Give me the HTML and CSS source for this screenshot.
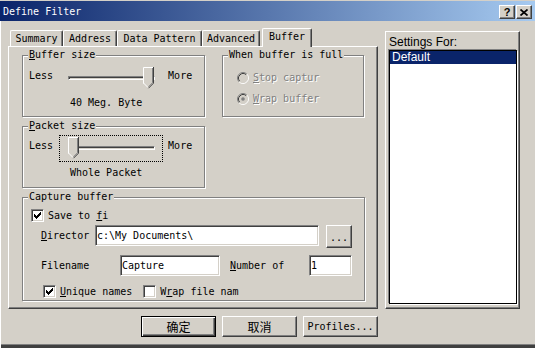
FILE: index.html
```html
<!DOCTYPE html>
<html lang="en">
<head>
    <meta charset="UTF-8">
    <title>Define Filter</title>
    <link rel="stylesheet" href="styles.css">
</head>
<body>
<div class="window">

    <!-- Title bar -->
    <div class="titlebar">
        <span class="title">Define Filter</span>
        <div class="cap-buttons">
            <span class="cap-btn help">?</span>
            <span class="cap-btn close">
                <svg width="8" height="7" viewBox="0 0 8 7"><path d="M0.5 0.5L7.5 6.5M7.5 0.5L0.5 6.5" stroke="#000" stroke-width="1.7"/></svg>
            </span>
        </div>
    </div>

    <div class="main">
        <div class="left">
            <!-- Tabs -->
            <div class="tabs">
                <span class="tab w-summary">Summary</span>
                <span class="tab w-address">Address</span>
                <span class="tab w-pattern">Data Pattern</span>
                <span class="tab w-advanced">Advanced</span>
                <span class="tab active">Buffer</span>
            </div>

            <div class="panel">
                <div class="row-top">
                    <div class="group g-buffer">
                        <div class="group-title"><u>B</u>uffer size</div>
                        <div class="slider-row first">
                            <span class="sl-label">Less</span>
                            <div class="slider">
                                <div class="track"></div>
                                <svg class="thumb thumb-right" width="11" height="22" viewBox="0 0 11 22">
                                    <polygon points="0,0 11,0 11,16 5.5,21.5 0,16" fill="#d4d0c8"/>
                                    <polyline points="0.5,16.5 0.5,0.5 10,0.5" fill="none" stroke="#fff"/>
                                    <polyline points="0.5,16 5,20.5" fill="none" stroke="#fff"/>
                                    <polyline points="10.5,0 10.5,16.2 5.5,21.2" fill="none" stroke="#404040"/>
                                    <polyline points="9.5,1 9.5,15.8 5.5,19.8" fill="none" stroke="#808080"/>
                                </svg>
                            </div>
                            <span class="sl-label more">More</span>
                        </div>
                        <div class="sl-caption">40 Meg. Byte</div>
                    </div>

                    <div class="group g-when">
                        <div class="group-title">When buffer is full</div>
                        <div class="radio-row first">
                            <svg class="radio" width="12" height="12" viewBox="0 0 12 12">
                                <circle cx="6" cy="6" r="5" fill="#d4d0c8"/>
                                <path d="M2.11 9.89A5.5 5.5 0 0 1 9.89 2.11" fill="none" stroke="#808080"/>
                                <path d="M9.89 2.11A5.5 5.5 0 0 1 2.11 9.89" fill="none" stroke="#fff"/>
                                <path d="M2.82 9.18A4.5 4.5 0 0 1 9.18 2.82" fill="none" stroke="#404040"/>
                                <path d="M9.18 2.82A4.5 4.5 0 0 1 2.82 9.18" fill="none" stroke="#d4d0c8"/>
                            </svg>
                            <span class="disabled"><u>S</u>top captur</span>
                        </div>
                        <div class="radio-row">
                            <svg class="radio" width="12" height="12" viewBox="0 0 12 12">
                                <circle cx="6" cy="6" r="5" fill="#d4d0c8"/>
                                <path d="M2.11 9.89A5.5 5.5 0 0 1 9.89 2.11" fill="none" stroke="#808080"/>
                                <path d="M9.89 2.11A5.5 5.5 0 0 1 2.11 9.89" fill="none" stroke="#fff"/>
                                <path d="M2.82 9.18A4.5 4.5 0 0 1 9.18 2.82" fill="none" stroke="#404040"/>
                                <path d="M9.18 2.82A4.5 4.5 0 0 1 2.82 9.18" fill="none" stroke="#d4d0c8"/>
                                <circle cx="6" cy="6" r="1.8" fill="#808080"/>
                            </svg>
                            <span class="disabled"><u>W</u>rap buffer</span>
                        </div>
                    </div>
                </div>

                <div class="group g-packet">
                    <div class="group-title"><u>P</u>acket size</div>
                    <div class="slider-row">
                        <span class="sl-label">Less</span>
                        <div class="slider focus">
                            <div class="track"></div>
                            <svg class="thumb" width="11" height="22" viewBox="0 0 11 22">
                                <polygon points="0,0 11,0 11,16 5.5,21.5 0,16" fill="#d4d0c8"/>
                                <polyline points="0.5,16.5 0.5,0.5 10,0.5" fill="none" stroke="#fff"/>
                                <polyline points="0.5,16 5,20.5" fill="none" stroke="#fff"/>
                                <polyline points="10.5,0 10.5,16.2 5.5,21.2" fill="none" stroke="#404040"/>
                                <polyline points="9.5,1 9.5,15.8 5.5,19.8" fill="none" stroke="#808080"/>
                            </svg>
                        </div>
                        <span class="sl-label more">More</span>
                    </div>
                    <div class="sl-caption">Whole Packet</div>
                </div>

                <div class="group g-capture">
                    <div class="group-title">Capture buffer</div>
                    <div class="check-row save-row">
                        <span class="check"><svg width="11" height="11" viewBox="0 0 11 11"><path d="M2 4h1v3h-1zM3 5h1v3h-1zM4 6h1v3h-1zM5 5h1v3h-1zM6 4h1v3h-1zM7 3h1v3h-1zM8 2h1v3h-1z" fill="#000"/></svg></span>
                        <span>Save to <u>f</u>i</span>
                    </div>
                    <div class="field-row dir-row">
                        <span class="f-label w-dir"><u>D</u>irector</span>
                        <input class="field f-dir" type="text" value="c:\My Documents\">
                        <span class="btn browse">...</span>
                    </div>
                    <div class="field-row file-row">
                        <span class="f-label w-file">Filename</span>
                        <input class="field f-file" type="text" value="Capture">
                        <span class="f-label w-num"><u>N</u>umber of</span>
                        <input class="field f-num" type="text" value="1">
                    </div>
                    <div class="check-row unique-row">
                        <span class="check"><svg width="11" height="11" viewBox="0 0 11 11"><path d="M2 4h1v3h-1zM3 5h1v3h-1zM4 6h1v3h-1zM5 5h1v3h-1zM6 4h1v3h-1zM7 3h1v3h-1zM8 2h1v3h-1z" fill="#000"/></svg></span>
                        <span><u>U</u>nique names</span>
                        <span class="check second"></span>
                        <span>W<u>r</u>ap file nam</span>
                    </div>
                </div>
            </div>
        </div>

        <!-- Settings list -->
        <div class="settings">
            <div class="settings-label">Settings For:</div>
            <div class="listbox">
                <div class="item selected">Default</div>
            </div>
        </div>
    </div>

    <div class="buttons">
        <span class="btn push default cjk">确定</span>
        <span class="btn push cjk">取消</span>
        <span class="btn push">Profiles...</span>
    </div>
</div>
</body>
</html>
```

FILE: styles.css
```css
html, body {
    margin: 0;
    padding: 0;
    background: #d4d0c8;
    overflow: hidden;
}
.window {
    width: 535px;
    height: 348px;
    box-sizing: border-box;
    font-family: "DejaVu Sans Mono", monospace;
    font-size: 10px;
    line-height: 12px;
    color: #000;
    background: #d4d0c8;
    box-shadow: inset 1px 0 0 #fff, inset 0 -4px 0 #404040, inset 0 -5px 0 #808080;
}
u {
    text-decoration: underline;
    text-underline-offset: 1px;
}
/* Title bar */
.titlebar {
    margin-top: 1px;
    height: 20px;
    box-sizing: border-box;
    padding: 2px 3px 0 3px;
    display: flex;
    align-items: center;
    justify-content: space-between;
    background: linear-gradient(to right, #0a246a, #a6caf0);
}
.title {
    color: #fff;
}
.cap-buttons {
    display: flex;
    gap: 1px;
}
.cap-btn {
    width: 16px;
    height: 14px;
    box-sizing: border-box;
    display: flex;
    align-items: center;
    justify-content: center;
    background: #d4d0c8;
    border: 1px solid;
    border-color: #fff #404040 #404040 #fff;
    box-shadow: inset -1px -1px 0 #808080;
}
.help {
    font-family: "Liberation Sans", sans-serif;
    font-weight: bold;
    font-size: 11px;
}
/* Layout */
.main {
    display: flex;
    align-items: flex-start;
    padding-left: 8px;
}
.left {
    width: 370px;
}
/* Tabs */
.tabs {
    display: flex;
    align-items: flex-end;
    height: 18px;
    margin-top: 7px;
    padding-left: 2px;
}
.tab {
    height: 16px;
    box-sizing: border-box;
    padding-top: 1px;
    line-height: 14px;
    text-align: center;
    border-left: 1px solid #fff;
    border-top: 1px solid #fff;
    border-right: 1px solid #404040;
    box-shadow: inset -1px 0 0 #808080;
    border-radius: 2px 2px 0 0;
}
.w-summary { width: 53px; }
.w-address { width: 54px; }
.w-pattern { width: 85px; }
.w-advanced { width: 58px; }
.tab.active {
    align-self: flex-start;
    width: 50px;
    height: 19px;
    margin-left: 2px;
    position: relative;
    z-index: 1;
    background: #d4d0c8;
}
.panel {
    width: 370px;
    height: 263px;
    box-sizing: border-box;
    padding: 8px 0 0 13px;
    border: 1px solid;
    border-color: #fff #404040 #404040 #fff;
    box-shadow: inset -1px -1px 0 #808080;
}
.row-top {
    display: flex;
    align-items: flex-start;
    gap: 17px;
}
/* Group boxes */
.group {
    box-sizing: border-box;
    border: 1px solid #808080;
    box-shadow: inset 1px 1px 0 #fff, 1px 1px 0 #fff;
}
.group-title {
    width: fit-content;
    margin: -7px 0 0 5px;
    padding: 0 1px;
    background: #d4d0c8;
}
.g-buffer { width: 183px; height: 62px; }
.g-when { width: 142px; height: 62px; }
.g-packet { width: 183px; height: 62px; margin-top: 9px; }
.g-capture { width: 343px; height: 104px; margin-top: 9px; }
/* Sliders */
.slider-row {
    display: flex;
    align-items: flex-start;
    padding-left: 6px;
    margin-top: 3px;
}
.slider-row.first {
    margin-top: 4px;
}
.sl-label {
    margin-top: 5px;
}
.sl-label.more {
    margin-left: 5px;
}
.slider {
    position: relative;
    width: 104px;
    height: 27px;
    box-sizing: border-box;
    margin-left: 6px;
    border: 1px dotted transparent;
}
.slider.focus {
    border-color: #000;
}
.track {
    position: absolute;
    left: 8px;
    top: 10px;
    width: 87px;
    height: 4px;
    box-sizing: border-box;
    border: 1px solid;
    border-color: #808080 #fff #fff #808080;
    box-shadow: inset 1px 1px 0 #404040;
}
.thumb {
    position: absolute;
    left: 8px;
    top: 1px;
}
.thumb.thumb-right {
    left: 83px;
}
.sl-caption {
    margin-top: 5px;
    padding-left: 47px;
}
/* Radios */
.radio-row {
    display: flex;
    align-items: center;
    gap: 4px;
    height: 12px;
    padding-left: 14px;
    margin-top: 9px;
}
.radio-row.first {
    margin-top: 11px;
}
.disabled {
    color: #808080;
    text-shadow: 1px 1px 0 #fff;
}
/* Checkboxes */
.check-row {
    display: flex;
    align-items: center;
    height: 13px;
    gap: 4px;
}
.save-row {
    margin-top: 6px;
    padding-left: 8px;
}
.unique-row {
    margin-top: 9px;
    padding-left: 20px;
}
.check {
    width: 13px;
    height: 13px;
    box-sizing: border-box;
    background: #fff;
    border: 1px solid;
    border-color: #808080 #fff #fff #808080;
    box-shadow: inset 1px 1px 0 #404040, inset -1px -1px 0 #d4d0c8;
}
.check svg {
    display: block;
}
.check.second {
    margin-left: 7px;
}
/* Text fields */
.field-row {
    display: flex;
    align-items: flex-start;
    padding-left: 18px;
}
.dir-row {
    margin-top: 3px;
}
.file-row {
    margin-top: 7px;
}
.f-label {
    line-height: 21px;
}
.w-dir { width: 54px; }
.w-file { width: 79px; }
.w-num { width: 79px; margin-left: 10px; }
.field {
    height: 21px;
    box-sizing: border-box;
    margin: 0;
    padding: 0 0 0 1px;
    font: inherit;
    color: #000;
    background: #fff;
    border: 1px solid;
    border-color: #808080 #fff #fff #808080;
    box-shadow: inset 1px 1px 0 #404040, inset -1px -1px 0 #d4d0c8;
    outline: none;
}
.f-dir { width: 224px; }
.f-file { width: 100px; }
.f-num { width: 43px; }
/* Buttons */
.btn {
    box-sizing: border-box;
    display: flex;
    align-items: center;
    justify-content: center;
    background: #d4d0c8;
    border: 1px solid;
    border-color: #fff #404040 #404040 #fff;
    box-shadow: inset -1px -1px 0 #808080;
}
.browse {
    width: 26px;
    height: 23px;
    margin-left: 7px;
    padding-top: 3px;
}
.buttons {
    display: flex;
    gap: 6px;
    margin-top: 7px;
    padding-left: 141px;
}
.push {
    width: 75px;
    height: 21px;
}
.push.default {
    border-color: #000;
    box-shadow: inset 1px 1px 0 #fff, inset -1px -1px 0 #404040, inset -2px -2px 0 #808080;
}
.cjk {
    font-family: "Noto Sans CJK SC", sans-serif;
    font-size: 12px;
}
/* Settings list */
.settings {
    width: 135px;
    height: 278px;
    box-sizing: border-box;
    margin: 10px 0 0 7px;
    padding: 3px 0 0 3px;
    border: 1px solid;
    border-color: #fff #404040 #404040 #fff;
    box-shadow: inset -1px -1px 0 #808080;
}
.settings-label {
    font-family: "Liberation Sans", sans-serif;
    font-size: 12px;
    line-height: 15px;
}
.listbox {
    width: 128px;
    height: 254px;
    box-sizing: border-box;
    background: #fff;
    border: 1px solid #000;
    box-shadow: -1px -1px 0 #808080, 1px 1px 0 #fff;
}
.item {
    font-family: "Liberation Sans", sans-serif;
    font-size: 12px;
    line-height: 13px;
    padding-left: 2px;
}
.item.selected {
    background: #0a246a;
    color: #fff;
}
```
